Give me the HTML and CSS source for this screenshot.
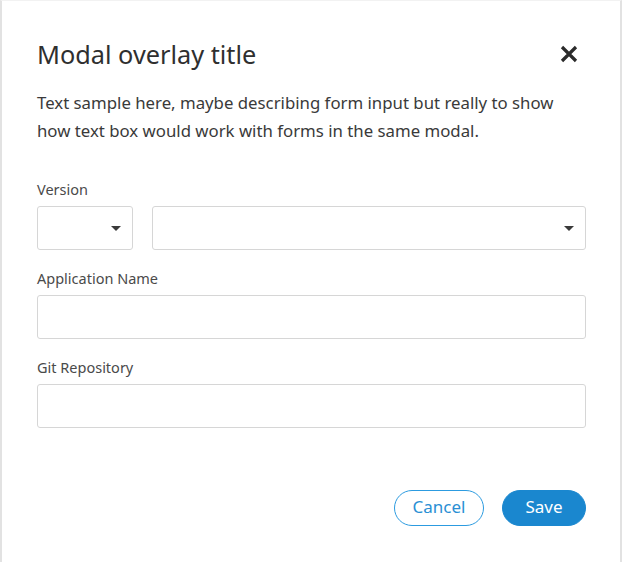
FILE: index.html
```html
<!DOCTYPE html>
<html>
<head>
<meta charset="utf-8">
<link rel="stylesheet" href="styles.css">
</head>
<body>
<div class="modal">
  <div class="modal-header">
    <h1 class="modal-title">Modal overlay title</h1>
    <button class="close" aria-label="Close">
      <svg width="18" height="18" viewBox="0 0 18 18"><path d="M2 2 L16 16 M16 2 L2 16" stroke="#2b2b2b" stroke-width="3.2" stroke-linecap="butt"/></svg>
    </button>
  </div>
  <p class="modal-text">Text sample here, maybe describing form input but really to show how text box would work with forms in the same modal.</p>
  <div class="field">
    <label class="label">Version</label>
    <div class="select-row">
      <div class="select small"><span class="caret"></span></div>
      <div class="select wide"><span class="caret"></span></div>
    </div>
  </div>
  <div class="field">
    <label class="label">Application Name</label>
    <div class="input"></div>
  </div>
  <div class="field">
    <label class="label">Git Repository</label>
    <div class="input"></div>
  </div>
  <div class="actions">
    <button class="btn btn-outline">Cancel</button>
    <button class="btn btn-primary">Save</button>
  </div>
</div>
</body>
</html>
```
FILE: styles.css
```css
html, body {
  margin: 0;
  padding: 0;
  background: #ffffff;
}
body {
  font-family: "Noto Sans", "Open Sans", sans-serif;
  color: #333333;
}
.modal {
  box-sizing: border-box;
  width: 622px;
  height: 562px;
  border-left: 2px solid #e2e2e2;
  border-right: 2px solid #e2e2e2;
  border-top: 1px solid #f2f2f2;
  padding: 35px 34px 0 35px;
}
.modal-header {
  display: flex;
  align-items: center;
  justify-content: space-between;
}
.modal-title {
  margin: 0;
  font-size: 25.3px;
  font-weight: 400;
  line-height: 36px;
  color: #2f2f2f;
}
.close {
  border: none;
  background: none;
  padding: 0;
  margin-right: 8px;
  width: 18px;
  height: 18px;
  display: flex;
}
.modal-text {
  margin: 17px 0 0;
  font-size: 16.8px;
  line-height: 28px;
  color: #3a3a3a;
}
.field {
  margin-top: 18px;
}
.modal-text + .field {
  margin-top: 34px;
}
.label {
  display: block;
  font-size: 14.5px;
  line-height: 20px;
  color: #4a4a4a;
  margin-bottom: 7px;
}
.select-row {
  display: flex;
  gap: 19px;
}
.select, .input {
  box-sizing: border-box;
  height: 44px;
  border: 1px solid #d6d6d6;
  border-radius: 3px;
  background: #fff;
}
.select {
  display: flex;
  align-items: center;
  justify-content: flex-end;
  padding-right: 11px;
}
.select.small {
  width: 96px;
}
.select.wide {
  flex: 1;
}
.caret {
  width: 0;
  height: 0;
  border-left: 5px solid transparent;
  border-right: 5px solid transparent;
  border-top: 5px solid #3a3a3a;
}
.actions {
  display: flex;
  justify-content: flex-end;
  gap: 18px;
  margin-top: 62px;
}
.btn {
  box-sizing: border-box;
  height: 36px;
  border-radius: 18px;
  font-family: "Noto Sans", "Open Sans", sans-serif;
  font-size: 17px;
  padding: 0 0 3px;
  cursor: pointer;
}
.btn-outline {
  width: 90px;
  background: #fff;
  border: 1px solid #2c9be0;
  color: #2a8fd4;
}
.btn-primary {
  width: 84px;
  background: #1a87cf;
  border: 1px solid #1a87cf;
  color: #ffffff;
}
```
